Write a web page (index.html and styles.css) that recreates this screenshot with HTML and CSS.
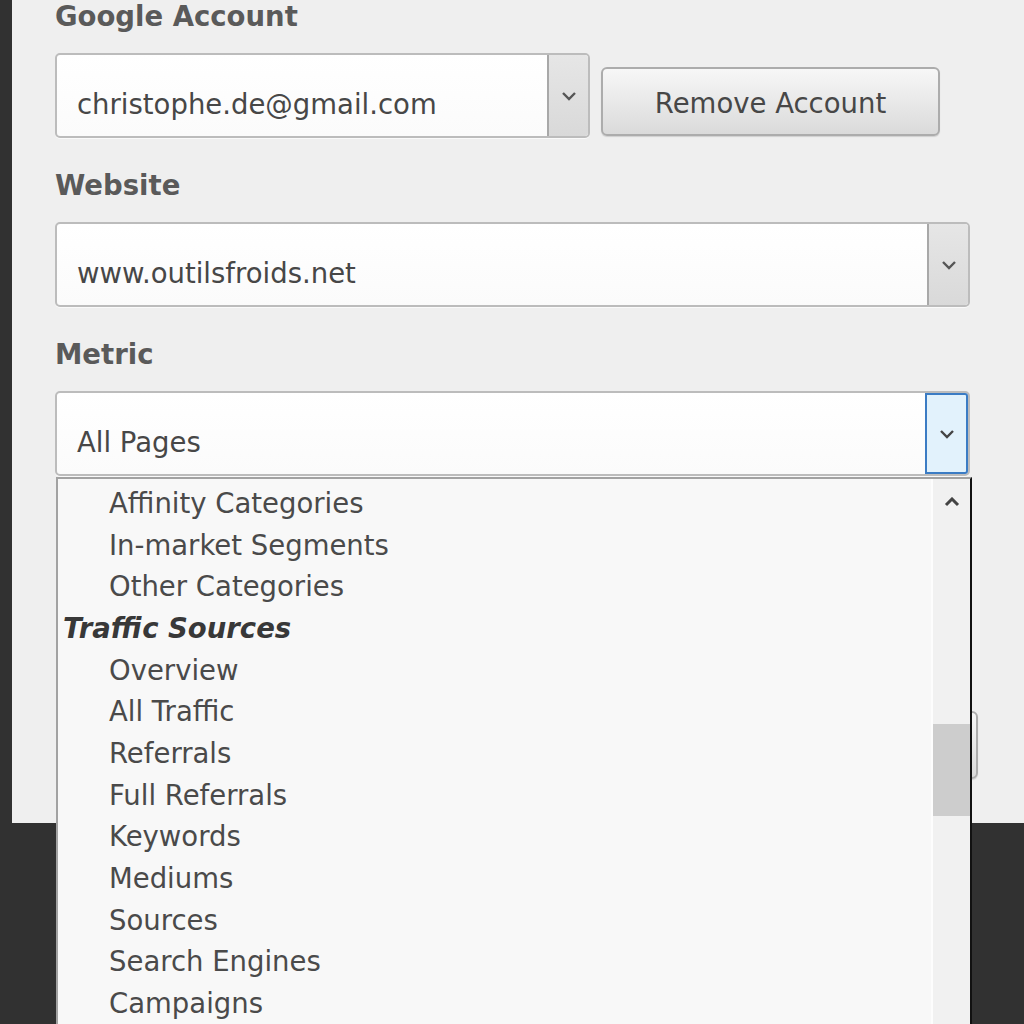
FILE: index.html
```html
<!DOCTYPE html>
<html lang="en">
<head>
  <meta charset="UTF-8" />
  <title>Analytics Settings</title>
  <link rel="stylesheet" href="styles.css">
</head>
<body>
  <div class="panel">
    <div class="field-label">Google Account</div>
    <div class="account-row">
      <div class="select select-account">
        <span class="select-value">christophe.de@gmail.com</span>
        <span class="select-arrow">
          <svg width="16" height="10" viewBox="0 0 16 10"><path d="M2 2 L8 8 L14 2" fill="none" stroke="#555" stroke-width="2.4"/></svg>
        </span>
      </div>
      <button class="btn">Remove Account</button>
    </div>

    <div class="field-label">Website</div>
    <div class="select">
      <span class="select-value">www.outilsfroids.net</span>
      <span class="select-arrow">
        <svg width="16" height="10" viewBox="0 0 16 10"><path d="M2 2 L8 8 L14 2" fill="none" stroke="#555" stroke-width="2.4"/></svg>
      </span>
    </div>

    <div class="field-label">Metric</div>
    <div class="metric-field">
      <div class="select select-open">
        <span class="select-value">All Pages</span>
        <span class="select-arrow">
          <svg width="16" height="10" viewBox="0 0 16 10"><path d="M2 2 L8 8 L14 2" fill="none" stroke="#444" stroke-width="2.4"/></svg>
        </span>
      </div>

      <div class="dropdown">
        <div class="options">
          <div class="option">Affinity Categories</div>
          <div class="option">In-market Segments</div>
          <div class="option">Other Categories</div>
          <div class="group">Traffic Sources</div>
          <div class="option">Overview</div>
          <div class="option">All Traffic</div>
          <div class="option">Referrals</div>
          <div class="option">Full Referrals</div>
          <div class="option">Keywords</div>
          <div class="option">Mediums</div>
          <div class="option">Sources</div>
          <div class="option">Search Engines</div>
          <div class="option">Campaigns</div>
        </div>
        <div class="scrollbar">
          <div class="scroll-up">
            <svg width="16" height="10" viewBox="0 0 16 10"><path d="M2 8 L8 2 L14 8" fill="none" stroke="#444" stroke-width="3"/></svg>
          </div>
          <div class="scroll-thumb"></div>
        </div>
      </div>
    </div>

    <div class="actions">
      <button class="btn btn-save">Save</button>
    </div>
  </div>
</body>
</html>
```

FILE: styles.css
```css
body {
  margin: 0;
  height: 1024px;
  overflow: hidden;
  background: #313131;
  font-family: "DejaVu Sans", Verdana, sans-serif;
  font-size: 27.5px;
  color: #444;
}
.panel {
  margin-left: 12px;
  height: 823px;
  background: #efefef;
  padding: 0 0 0 43px;
  box-sizing: border-box;
}

/* Labels */
.field-label {
  font-weight: bold;
  color: #5a5a5a;
  line-height: 32px;
  margin-top: 31px;
}
.field-label:first-child {
  margin-top: 0;
}

/* Select boxes */
.select {
  margin-top: 21px;
  width: 915px;
  height: 85px;
  box-sizing: border-box;
  border: 2px solid #bcbcbc;
  border-radius: 5px;
  background: linear-gradient(#ffffff, #fbfbfb);
  display: flex;
  align-items: center;
  box-shadow: 0 1px 0 #fafafa;
}
.select-value {
  flex: 1;
  padding: 16px 0 0 20px;
  color: #474747;
}
.select-arrow {
  width: 39px;
  align-self: stretch;
  display: flex;
  align-items: center;
  justify-content: center;
  background: linear-gradient(#e6e6e6, #d9d9d9);
  border-left: 2px solid #a8a8a8;
  border-radius: 0 3px 3px 0;
}
.select-open .select-arrow {
  background: #e2f2fc;
  border: 2px solid #3b7cc4;
}

.account-row {
  display: flex;
  align-items: flex-end;
  gap: 11px;
  margin-top: 21px;
}
.account-row .select {
  margin-top: 0;
}
.select-account {
  width: 535px;
}
.btn {
  font-family: inherit;
  font-size: 27.5px;
  color: #474747;
  width: 339px;
  height: 69px;
  padding-top: 4px;
  margin-bottom: 2px;
  border: 2px solid #acacac;
  border-radius: 6px;
  background: linear-gradient(#f7f7f7, #e9e9e9 50%, #dadada);
  box-shadow: 0 1px 1px #cfcfcf;
}

/* Open dropdown list */
.metric-field {
  position: relative;
}
.dropdown {
  position: absolute;
  top: 100%;
  left: 1px;
  width: 916px;
  height: 570px;
  box-sizing: border-box;
  margin-top: 1px;
  border: 2px solid #a2a2a2;
  border-right-color: #111;
  background: #f8f8f8;
  display: flex;
}
.options {
  flex: 1;
  padding-top: 4px;
}
.option,
.group {
  height: 41.67px;
  line-height: 41.67px;
  white-space: nowrap;
}
.option {
  padding-left: 51px;
  color: #4a4a4a;
}
.group {
  padding-left: 5px;
  font-weight: bold;
  font-style: italic;
  color: #383838;
}
.scrollbar {
  width: 37px;
  background: #f1f1f1;
  border-left: 2px solid #fdfdfd;
}
.scroll-up {
  height: 46px;
  display: flex;
  align-items: center;
  justify-content: center;
}
.scroll-thumb {
  margin-top: 199px;
  height: 92px;
  background: #cdcdcd;
}

/* Buttons hidden under the list */
.actions {
  display: flex;
  justify-content: flex-end;
  width: 923px;
  margin-top: 235px;
}
.btn-save {
  width: 300px;
  height: 68px;
}
```
